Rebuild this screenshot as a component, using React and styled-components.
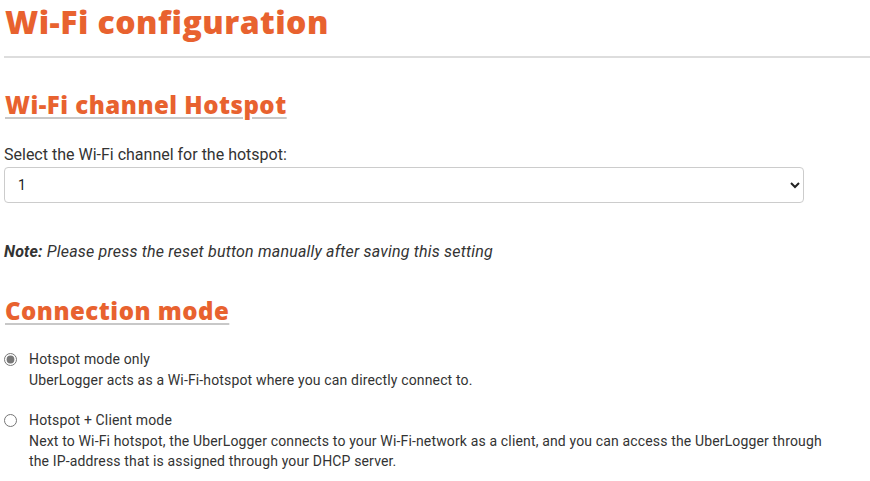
import React from "react";
import styled, { createGlobalStyle } from "styled-components";

const Global = createGlobalStyle`
  html, body { margin: 0; padding: 0; background: #fff; }
  body { font-family: Roboto, "Liberation Sans", sans-serif; color: #333; }
`;

const Page = styled.div`
  padding: 0 0 0 4px;
`;

const Title = styled.h1`
  margin: 0;
  padding: 2px 0 0 1px;
  font-family: "Open Sans", "Liberation Sans", sans-serif;
  font-weight: 800;
  font-size: 32px;
  line-height: 40px;
  color: #e8622f;
  letter-spacing: 0.45px;
`;

const Rule = styled.hr`
  margin: 14px 0 0 0;
  border: 0;
  border-top: 2px solid #ddd;
`;

const SectionTitle = styled.h2`
  margin: ${p => p.$top}px 0 0 1px;
  font-family: "Open Sans", "Liberation Sans", sans-serif;
  font-weight: 800;
  font-size: 24px;
  line-height: 30px;
  color: #e8622f;
  letter-spacing: 0.5px;
  text-decoration: underline;
  text-decoration-color: #c8c8c8;
  text-decoration-thickness: 2px;
  text-underline-offset: 3px;
  display: inline-block;
`;

const Label = styled.label`
  display: block;
  margin-top: 25px;
  font-size: 16px;
  line-height: 20px;
  color: #333;
`;

const Select = styled.select`
  display: block;
  margin-top: 2px;
  width: 800px;
  height: 36px;
  padding: 0 8px 0 9px;
  border: 1px solid #ccc;
  border-radius: 4px;
  background: #fff;
  font-family: Roboto, "Liberation Sans", sans-serif;
  font-size: 14px;
  color: #222;
`;

const Note = styled.p`
  margin: 39px 0 0 0;
  font-size: 16px;
  line-height: 20px;
  font-style: italic;
  letter-spacing: 0.19px;
  color: #333;
  b { font-weight: 700; }
`;

const Options = styled.div`
  display: flex;
  flex-direction: column;
  gap: 20px;
  margin-top: 23px;
`;

const Option = styled.label`
  display: flex;
  align-items: flex-start;
  gap: 12px;
  font-size: 14px;
  line-height: 20.5px;
  letter-spacing: 0.15px;
  color: #333;
`;

const Radio = styled.input`
  margin: 4px 0 0 0;
  width: 13px;
  height: 13px;
  accent-color: #777;
  flex: none;
`;

const OptionText = styled.div`
  display: flex;
  flex-direction: column;
  max-width: 800px;
`;

export default function App() {
  return (
    <>
      <Global />
      <Page>
        <Title>Wi-Fi configuration</Title>
        <Rule />
        <SectionTitle $top={32}>Wi-Fi channel Hotspot</SectionTitle>
        <Label htmlFor="ch">Select the Wi-Fi channel for the hotspot:</Label>
        <Select id="ch" defaultValue="1">
          {Array.from({ length: 13 }, (_, i) => (
            <option key={i} value={i + 1}>{i + 1}</option>
          ))}
        </Select>
        <Note><b>Note:</b> Please press the reset button manually after saving this setting</Note>
        <div>
          <SectionTitle $top={34}>Connection mode</SectionTitle>
        </div>
        <Options>
          <Option>
            <Radio type="radio" name="mode" defaultChecked />
            <OptionText>
              <span>Hotspot mode only</span>
              <span>UberLogger acts as a Wi-Fi-hotspot where you can directly connect to.</span>
            </OptionText>
          </Option>
          <Option>
            <Radio type="radio" name="mode" />
            <OptionText>
              <span>Hotspot + Client mode</span>
              <span>Next to Wi-Fi hotspot, the UberLogger connects to your Wi-Fi-network as a client, and you can access the UberLogger through the IP-address that is assigned through your DHCP server.</span>
            </OptionText>
          </Option>
        </Options>
      </Page>
    </>
  );
}
